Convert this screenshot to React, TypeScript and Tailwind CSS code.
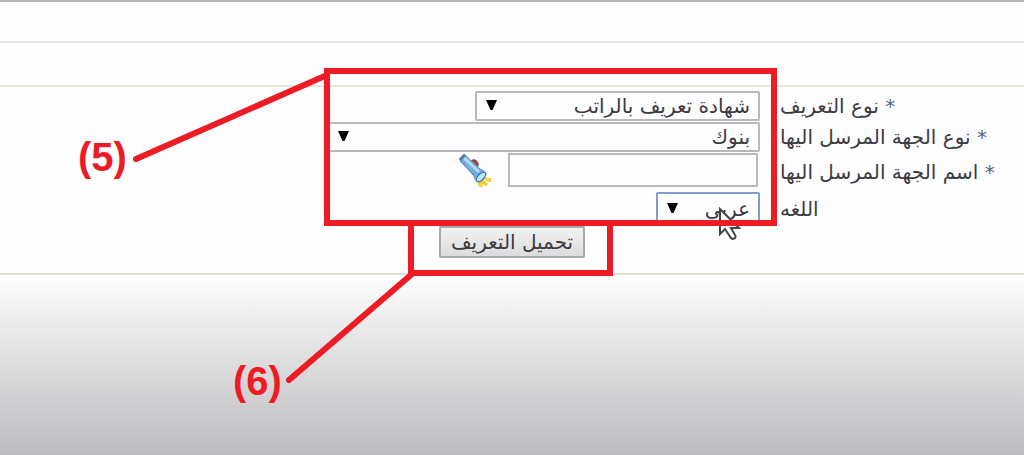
import type { ReactNode } from 'react';
import { clsx } from 'clsx';

function Row({ id, label, required, className, children }: { id: string; label: string; required?: boolean; className?: string; children: ReactNode }) {
    return (
        <div className={clsx('flex items-center gap-5', className)}>
            <label
                htmlFor={id}
                className="w-[244px] shrink-0 text-left whitespace-nowrap"
            >
                {required && <span className="text-[#5b6478]">* </span>}
                {label}
            </label>
            {children}
        </div>
    );
}

function SelectBox({ id, options, className, arrowClass }: { id: string; options: string[]; className: string; arrowClass: string }) {
    return (
        <div className="relative flex">
            <select
                id={id}
                className={clsx('appearance-none rounded-xs bg-[#fefdff] pr-2 outline-none', className)}
            >
                {options.map((option) => (
                    <option key={option}>{option}</option>
                ))}
            </select>
            <svg
                viewBox="0 0 11 10"
                className={clsx('pointer-events-none absolute h-[10px] w-[11px] fill-black', arrowClass)}
            >
                <path d="M0 0h11L6.5 10h-2z" />
            </svg>
        </div>
    );
}

function Flashlight() {
    return (
        <svg
            viewBox="0 0 34 34"
            className="size-[34px]"
        >
            <path d="M13 8c3-3 8 0 7 5l-3 1-5-4z" fill="#a8453d" stroke="#7d3a3a" />
            <path d="m25 24 8 2-1 3-7-3z" fill="#ffe13a" stroke="#eccb3c" />
            <path d="m24 26 6 5-2 2-6-4z" fill="#f2c81e" />
            <path d="m22 28 3 5-3 1-2-4z" fill="#f7dc45" stroke="#eccb3c" />
            <path d="M1 6 6 1l16 15c3 1 6 3 6 6l-6 7c-4 0-6-3-6-6z" fill="#72ade4" stroke="#6a93ba" />
            <path d="M5 4 21 19" stroke="#b5dcfa" strokeWidth="3" />
            <path d="m2 8 14 14" stroke="#4e88c4" strokeWidth="1" />
            <ellipse cx="23" cy="24" rx="6" ry="3" transform="rotate(-47 23 24)" fill="#bfe7ff" stroke="#2c60ae" />
            <path d="m1 6 5-5 2 2-5 5z" fill="#617b98" />
        </svg>
    );
}

function Pointer() {
    return (
        <svg
            viewBox="0 0 22 34"
            className="absolute top-[15px] left-[63px] h-[34px] w-[22px] fill-white stroke-[#444] stroke-2"
        >
            <path d="M1 2v25l5-5 6 9c2 2 6 0 4-3l-4-7h8z" />
        </svg>
    );
}

function Callouts() {
    return (
        <div
            dir="ltr"
            className="pointer-events-none absolute top-0 right-0 h-[455px] w-[1024px] font-['Liberation_Sans',sans-serif] text-[40px] leading-10 font-bold text-[#ed1c24]"
        >
            <svg
                viewBox="0 0 1024 455"
                className="absolute inset-0 size-full fill-none stroke-[#ed1c24] stroke-6"
            >
                <rect x="327" y="71" width="447" height="152" />
                <rect x="411" y="223" width="199" height="50" />
                <path d="M136 159 327 75M289 380 412 274" strokeLinecap="round" />
            </svg>
            <span className="absolute top-[137px] left-[78px]">(5)</span>
            <span className="absolute top-[361px] left-[233px]">(6)</span>
        </div>
    );
}

export default function App() {
    return (
        <div
            dir="rtl"
            className="relative flex min-h-screen flex-col overflow-hidden bg-[#fefdff] font-['DejaVu_Sans',sans-serif] text-[20px] leading-6 text-[#3c3b3f]"
        >
            <div className="h-[43px] border-t-2 border-b-2 border-t-[#b7b5b7] border-b-[#e6e6dc]" />
            <div className="h-11 border-b-2 border-[#e6e6d8]" />
            <form
                className="flex flex-col border-b-2 border-[#e0e0d0] pt-1 pb-[15px]"
                onSubmit={(e) => e.preventDefault()}
            >
                <Row id="type" label="نوع التعريف" required className="h-[30px]">
                    <SelectBox
                        id="type"
                        options={['شهادة تعريف بالراتب']}
                        className="h-[30px] w-[285px] border-2 border-[#b9b8bc]"
                        arrowClass="left-[11px] top-[9px]"
                    />
                </Row>
                <Row id="party" label="نوع الجهة المرسل اليها" required className="h-[31px]">
                    <SelectBox
                        id="party"
                        options={['بنوك']}
                        className="h-[30px] w-[434px] border-2 border-[#b9b8bc]"
                        arrowClass="left-[12px] top-[9px]"
                    />
                </Row>
                <Row id="name" label="اسم الجهة المرسل اليها" required className="h-10">
                    <div className="flex items-center gap-4 pr-[2px] pb-1">
                        <input
                            id="name"
                            type="text"
                            className="h-[34px] w-[250px] border-2 border-[#b9b8bc] bg-[#fefdff] px-2 outline-none"
                        />
                        <button type="button" aria-label="بحث">
                            <Flashlight />
                        </button>
                    </div>
                </Row>
                <Row id="language" label="اللغه" className="h-[34px]">
                    <div className="relative">
                        <SelectBox
                            id="language"
                            options={['عربي']}
                            className="h-[34px] w-[104px] border-2 border-[#839bd3]"
                            arrowClass="left-[11px] top-[11px]"
                        />
                        <Pointer />
                    </div>
                </Row>
                <button
                    type="submit"
                    className="h-8 w-[146px] self-center rounded-xs border-2 border-[#aaa9ac] bg-linear-to-b from-[#f2f2f2] to-[#dcdcde]"
                >
                    تحميل التعريف
                </button>
            </form>
            <div className="flex-1 bg-linear-to-b from-[#fefefe] to-[#bdbbbe]" />
            <Callouts />
        </div>
    );
}
